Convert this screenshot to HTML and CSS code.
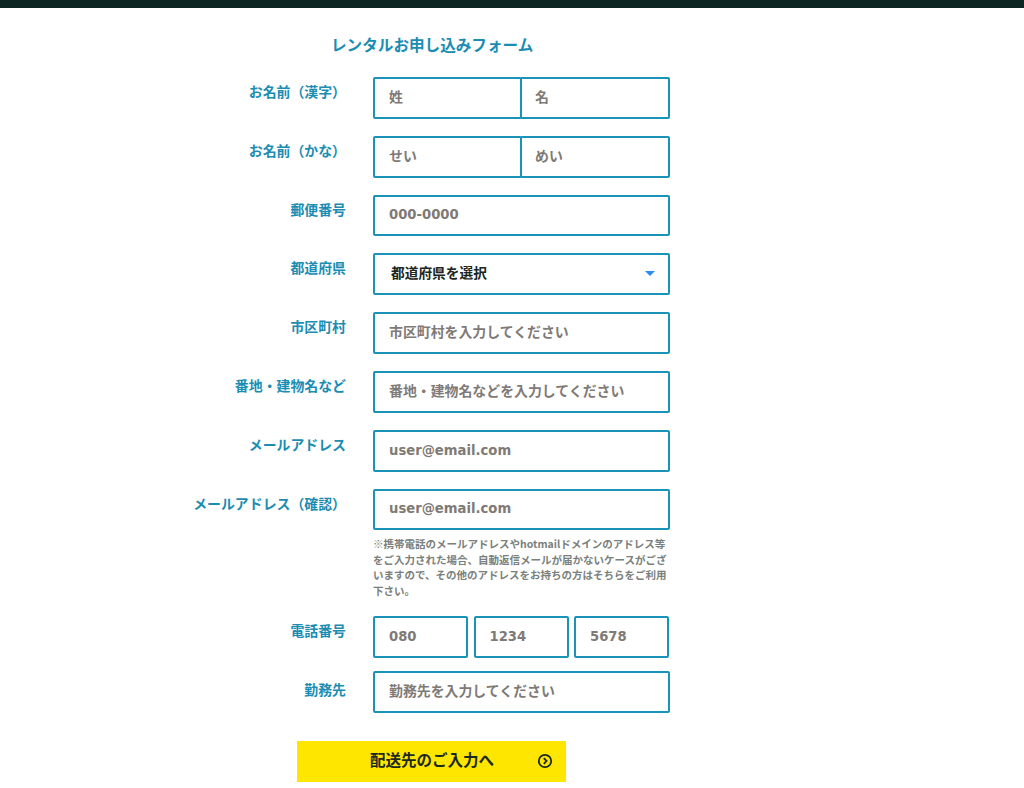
FILE: index.html
```html
<!DOCTYPE html>
<html lang="ja">
<head>
<meta charset="utf-8">
<title>レンタルお申し込みフォーム</title>
<link rel="stylesheet" href="styles.css">
</head>
<body>
<div class="topbar"></div>
<main class="page">
  <h1 class="title">レンタルお申し込みフォーム</h1>
  <form class="form">
    <div class="row">
      <label class="label">お名前（漢字）</label>
      <div class="field split">
        <input class="input" placeholder="姓">
        <input class="input joined" placeholder="名">
      </div>
    </div>
    <div class="row">
      <label class="label">お名前（かな）</label>
      <div class="field split">
        <input class="input" placeholder="せい">
        <input class="input joined" placeholder="めい">
      </div>
    </div>
    <div class="row">
      <label class="label">郵便番号</label>
      <div class="field"><input class="input latin" placeholder="000-0000"></div>
    </div>
    <div class="row">
      <label class="label">都道府県</label>
      <div class="field select-wrap">
        <select class="input select"><option>都道府県を選択</option></select>
        <span class="caret"></span>
      </div>
    </div>
    <div class="row">
      <label class="label">市区町村</label>
      <div class="field"><input class="input" placeholder="市区町村を入力してください"></div>
    </div>
    <div class="row">
      <label class="label">番地・建物名など</label>
      <div class="field"><input class="input" placeholder="番地・建物名などを入力してください"></div>
    </div>
    <div class="row">
      <label class="label">メールアドレス</label>
      <div class="field"><input class="input latin" placeholder="user@email.com"></div>
    </div>
    <div class="row row-note">
      <label class="label">メールアドレス（確認）</label>
      <div class="field">
        <input class="input latin" placeholder="user@email.com">
        <p class="note">※携帯電話のメールアドレスやhotmailドメインのアドレス等をご入力された場合、自動返信メールが届かないケースがございますので、その他のアドレスをお持ちの方はそちらをご利用下さい。</p>
      </div>
    </div>
    <div class="row row-tel">
      <label class="label">電話番号</label>
      <div class="field tel">
        <input class="input latin" placeholder="080">
        <input class="input latin" placeholder="1234">
        <input class="input latin" placeholder="5678">
      </div>
    </div>
    <div class="row">
      <label class="label label-low">勤務先</label>
      <div class="field"><input class="input" placeholder="勤務先を入力してください"></div>
    </div>
    <button class="submit" type="button">
      <span class="submit-text">配送先のご入力へ</span>
      <svg class="submit-icon" width="16" height="16" viewBox="0 0 16 16" aria-hidden="true"><circle cx="8" cy="8" r="6.2" fill="none" stroke="#1c2a1e" stroke-width="1.8"/><path d="M6.8 5.2 9.6 8l-2.8 2.8" fill="none" stroke="#1c2a1e" stroke-width="1.8"/></svg>
    </button>
  </form>
</main>
</body>
</html>
```
FILE: styles.css
```css
* { box-sizing: border-box; }
html, body { margin: 0; padding: 0; background: #fff; }
body {
  height: 788px;
  overflow: hidden;
  font-family: "DejaVu Sans", "Noto Sans CJK JP", sans-serif;
  font-weight: 700;
  color: #1b8db3;
}
.topbar { height: 8px; background: #0d2623; }
.page { padding-left: 193px; }
.title {
  margin: 0;
  width: 477px;
  padding: 28px 0 0 138px;
  height: 69px;
  font-size: 15.6px;
  line-height: 20px;
  font-weight: 700;
  color: #1b8db3;
}
.form { display: flex; flex-direction: column; }
.row { display: flex; margin-bottom: 17px; }
.row-note { margin-bottom: 18px; }
.row-tel { margin-bottom: 13.5px; }
.label {
  width: 153px;
  margin-right: 27px;
  flex: none;
  text-align: right;
  font-size: 13.9px;
  line-height: 20px;
  padding-top: 5px;
  color: #1b8db3;
}
.label-low { padding-top: 9px; }
.field { width: 297px; }
.split { display: flex; }
.split .input { width: 149px; }
.split .joined { width: 150px; margin-left: -2px; padding-left: 13px; }
.input {
  display: block;
  width: 100%;
  height: 41.8px;
  border: 2px solid #1a93b8;
  border-radius: 2px;
  background: #fff;
  padding: 0 14px 2px;
  font: 700 13.9px/20px "DejaVu Sans", "Noto Sans CJK JP", sans-serif;
  color: #1a2622;
  outline: none;
}
.input::placeholder { color: #7f7a76; opacity: 1; }
.latin { font-size: 13.2px; padding-bottom: 1px; }
.select-wrap { position: relative; }
.select { appearance: none; padding: 0 16px 2px; font-size: 13.7px; }
.caret {
  position: absolute;
  right: 15px;
  top: 18px;
  border-left: 5px solid transparent;
  border-right: 5px solid transparent;
  border-top: 5px solid #2a8cf0;
}
.note {
  margin: 6px 0 0;
  font-family: "Noto Sans CJK JP", sans-serif;
  font-size: 10.5px;
  line-height: 15.4px;
  color: #7a807c;
  word-break: break-all;
}
.tel { display: flex; justify-content: space-between; width: 296px; }
.tel .input { width: 95px; }
.submit {
  display: flex;
  align-items: center;
  position: relative;
  align-self: flex-start;
  width: 269px;
  height: 41px;
  margin: 11px 0 0 104px;
  border: 0;
  padding: 0 0 2px 73px;
  background: #ffe600;
  font: 700 15.5px/20px "DejaVu Sans", "Noto Sans CJK JP", sans-serif;
  color: #1c2a1e;
}
.submit-icon { position: absolute; right: 13px; top: 12px; }
```
